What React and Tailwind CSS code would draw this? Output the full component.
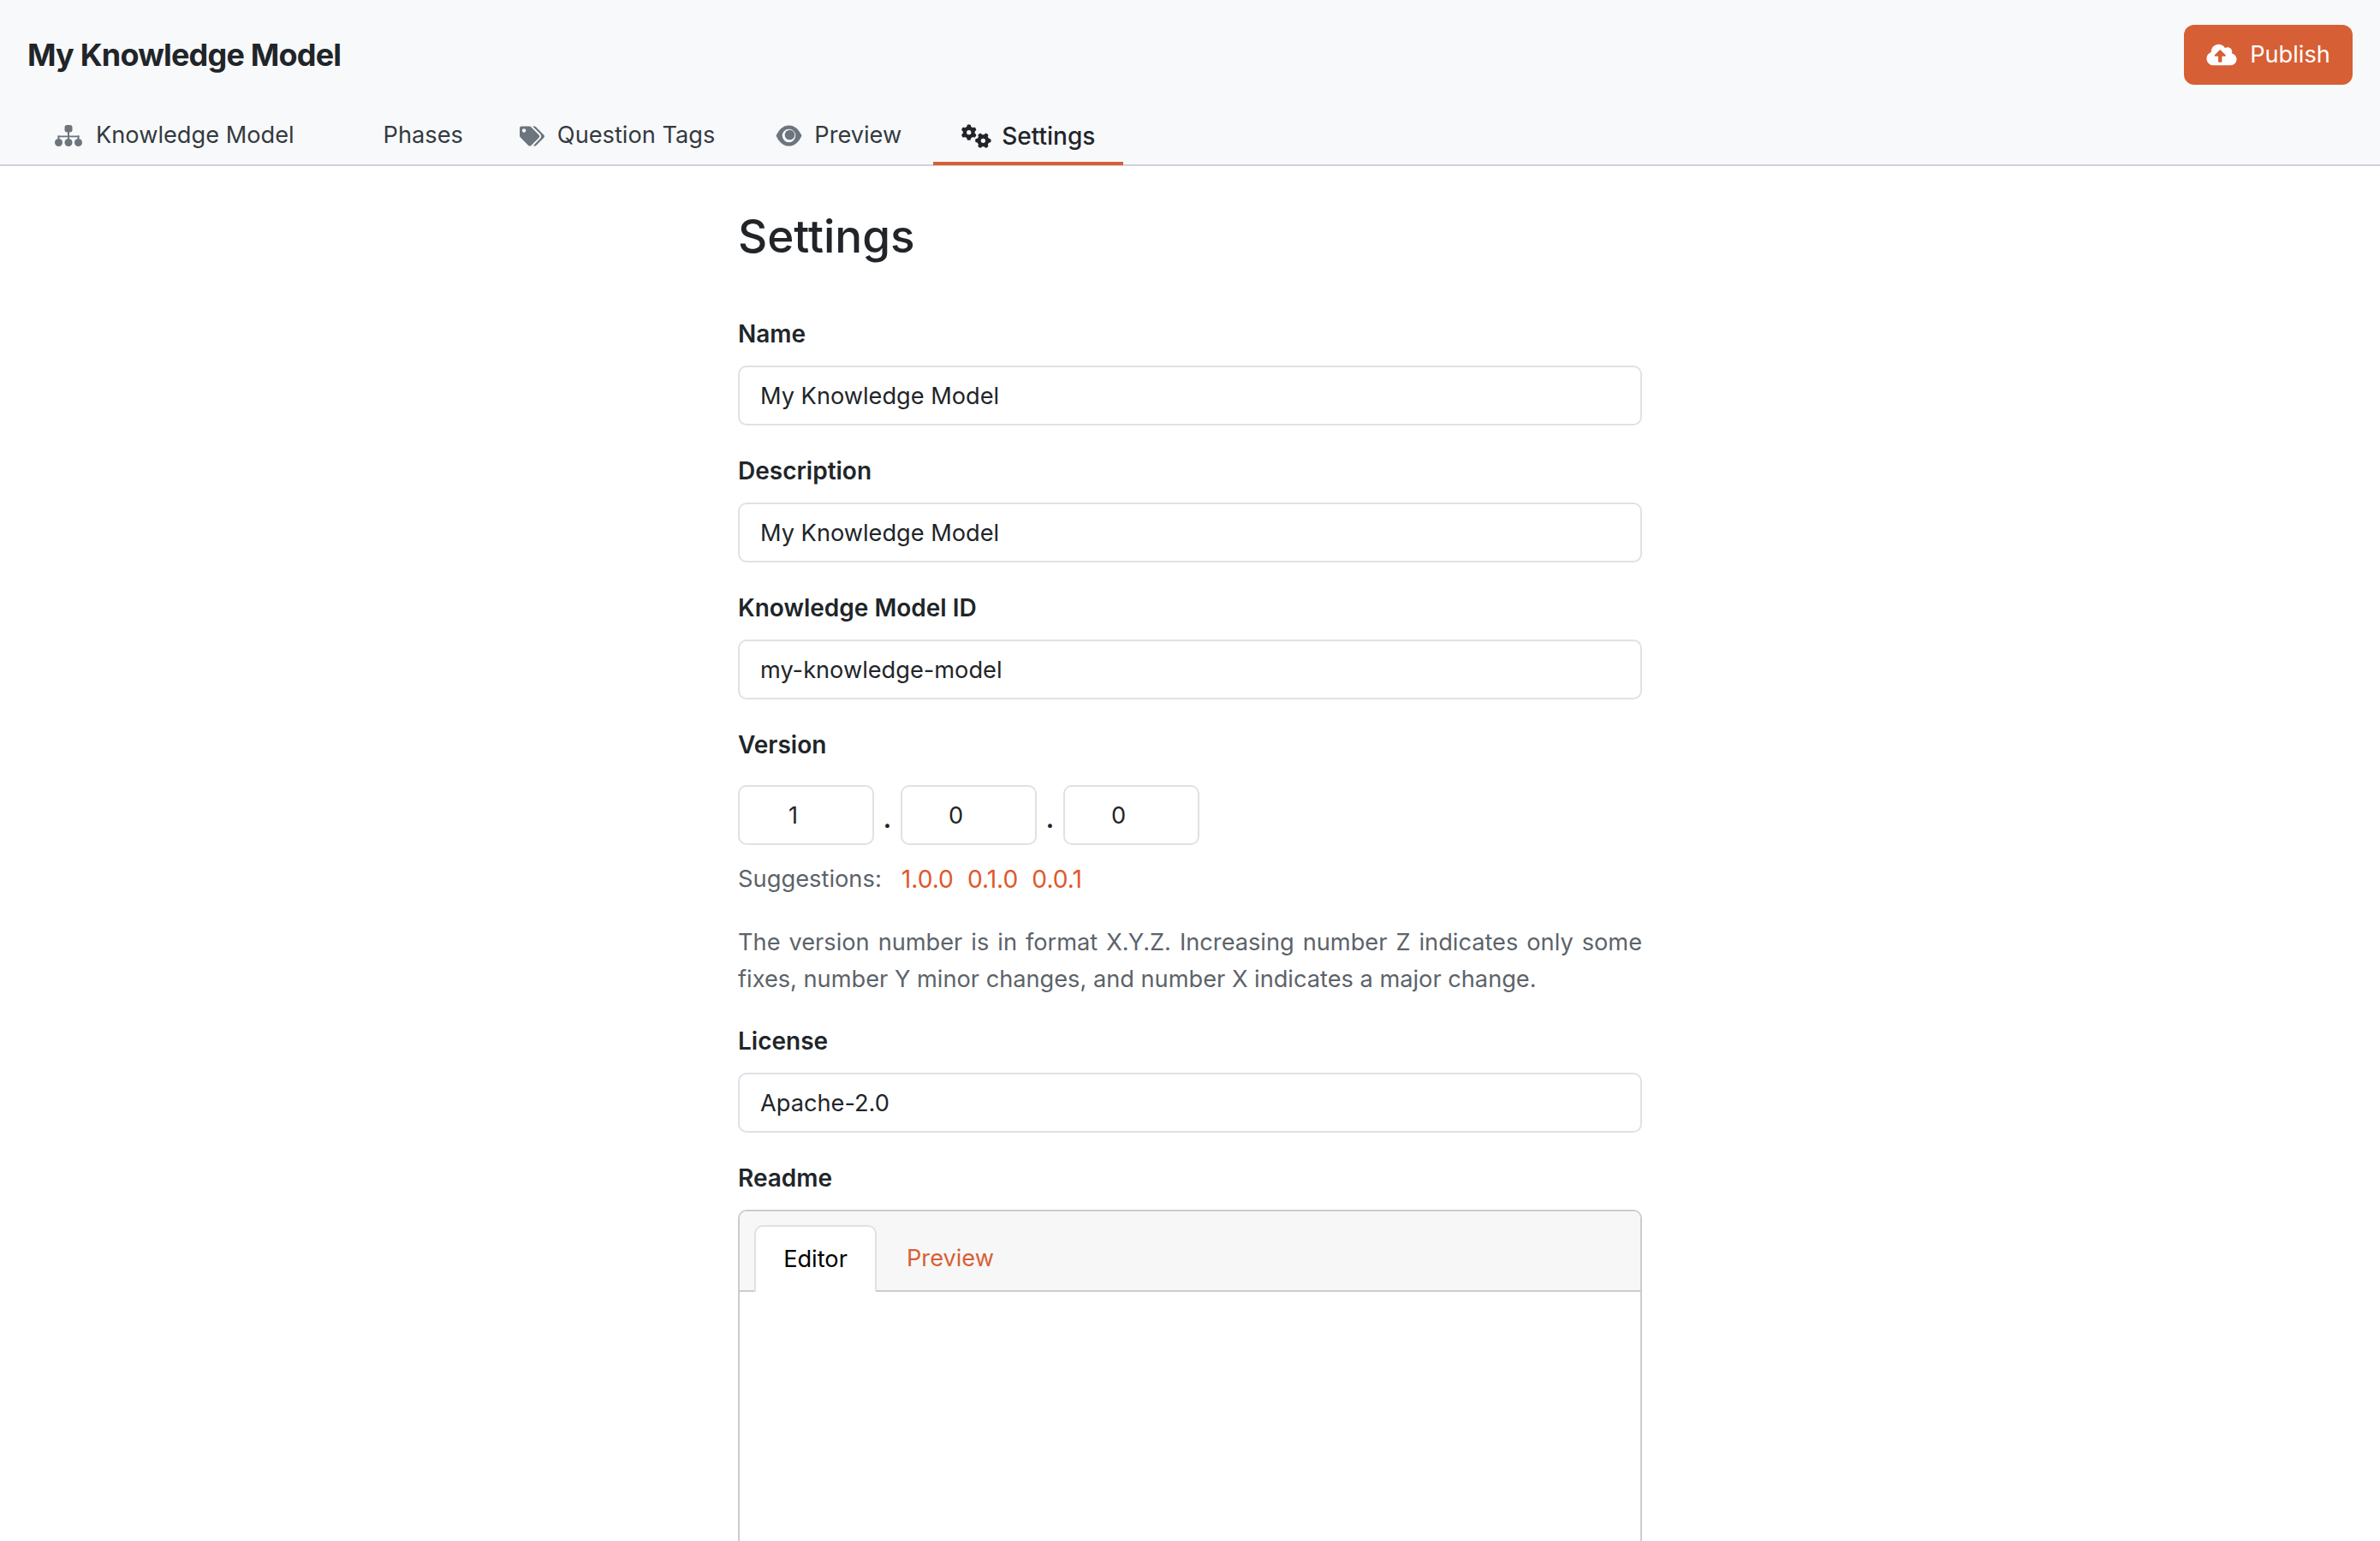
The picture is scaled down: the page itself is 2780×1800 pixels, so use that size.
import React from "react";
import { FaCloudUploadAlt, FaTags } from "react-icons/fa";
import { FaGears } from "react-icons/fa6";

const SitemapIcon = () => (
  <svg viewBox="0 0 32 25" className="w-[32px] h-[25px]" fill="currentColor">
    <rect x="11.5" y="0" width="9" height="8.5" rx="3" />
    <rect x="15" y="8" width="2" height="8" />
    <rect x="3.5" y="12.5" width="25" height="1.8" />
    <rect x="3.5" y="12.5" width="2" height="4" />
    <rect x="26.5" y="12.5" width="2" height="4" />
    <circle cx="4.5" cy="20.5" r="4.5" />
    <circle cx="16" cy="20.5" r="4.5" />
    <circle cx="27.5" cy="20.5" r="4.5" />
  </svg>
);

const EyeIcon = () => (
  <svg viewBox="0 0 32 25" className="w-[31px] h-[25px]" fill="currentColor">
    <path d="M0.5 12.5C4 5 9 0 16 0C23 0 28 5 31.5 12.5C28 20 23 25 16 25C9 25 4 20 0.5 12.5Z" />
    <circle cx="16" cy="12.5" r="8" fill="#f8f9fb" />
    <circle cx="17" cy="11.5" r="6" />
  </svg>
);

const tabs = [
  { label: "Knowledge Model", icon: <SitemapIcon />, slot: "w-[48px]" },
  { label: "Phases", slot: "w-[38px]" },
  { label: "Question Tags", icon: <FaTags className="w-[29px] h-[24px]" />, slot: "w-[44px]" },
  { label: "Preview", icon: <EyeIcon />, slot: "w-[50px] pl-[5px]" },
  { label: "Settings", icon: <FaGears className="w-[35px] h-[28px]" />, slot: "w-[47px]", active: true },
];

const Field = ({ label, value }) => (
  <div className="mb-[32px]">
    <label className="block mb-[16px] text-[28px] leading-[42px] font-semibold text-[#212529]">{label}</label>
    <input
      defaultValue={value}
      className="block w-full h-[70px] px-[24px] border-2 border-[#dee2e6] rounded-[10px] bg-white text-[27.2px] text-[#212529] outline-none"
    />
  </div>
);

const VersionInput = ({ value }) => (
  <input
    defaultValue={value}
    className="w-[159px] h-[70px] pr-[30px] border-2 border-[#dee2e6] rounded-[10px] bg-white text-center text-[27.2px] text-[#212529] outline-none"
  />
);

const Dot = () => <span className="w-[31px] self-end pb-[9px] text-center text-[28px] leading-[42px] font-bold text-[#212529]">.</span>;

export default function App() {
  return (
    <div className="h-[1800px] overflow-hidden bg-white font-['Inter',sans-serif] text-[#212529]">
      {/* Header */}
      <div className="h-[194px] bg-[#f8f9fb] border-b-2 border-[#d0d3d8]">
        <div className="flex items-center justify-between h-[128px] px-[32px]">
          <h1 className="text-[36px] leading-[54px] font-bold tracking-[-0.8px]">My Knowledge Model</h1>
          <button className="flex items-center gap-[15px] h-[70px] w-[197px] justify-center rounded-[12px] bg-[#d75f35] text-[27.2px] text-white">
            <FaCloudUploadAlt className="w-[36px] h-[28px]" />
            Publish
          </button>
        </div>
        <div className="flex pl-[31px] h-[65px]">
          {tabs.map((tab) => (
            <div
              key={tab.label}
              className={`flex items-center h-[65px] px-[33px] border-b-4 ${
                tab.active
                  ? "ml-[4px] text-[28px] font-medium border-[#d75f35] text-[#212529]"
                  : "text-[27.2px] border-transparent text-[#343a40]"
              }`}
            >
              <span className={`flex items-center ${tab.slot} ${tab.active ? "text-[#212529]" : "text-[#6c757d]"}`}>
                {tab.icon}
              </span>
              {tab.label}
            </div>
          ))}
        </div>
      </div>

      {/* Settings form */}
      <div className="w-[1056px] mx-auto">
        <h2 className="mt-[48px] mb-[59px] text-[53px] leading-[68px] font-medium">Settings</h2>
        <Field label="Name" value="My Knowledge Model" />
        <Field label="Description" value="My Knowledge Model" />
        <Field label="Knowledge Model ID" value="my-knowledge-model" />

        <label className="block mb-[26px] text-[28px] leading-[42px] font-semibold">Version</label>
        <div className="flex">
          <VersionInput value="1" />
          <Dot />
          <VersionInput value="0" />
          <Dot />
          <VersionInput value="0" />
        </div>
        <div className="flex mt-[19px] text-[27.3px] leading-[42px] text-[#5c636a]">
          <span>Suggestions:</span>
          <span className="flex gap-[16px] ml-[23px] text-[28.2px] text-[#e0582b]">
            <a>1.0.0</a>
            <a>0.1.0</a>
            <a>0.0.1</a>
          </span>
        </div>
        <p className="mt-[32px] mb-[30px] text-[27.2px] leading-[42.5px] text-justify text-[#5c636a]">
          The version number is in format X.Y.Z. Increasing number Z indicates only some fixes, number Y minor changes, and
          number X indicates a major change.
        </p>

        <Field label="License" value="Apache-2.0" />

        <label className="block mb-[16px] text-[28px] leading-[42px] font-semibold">Readme</label>
        <div className="h-[500px] border-2 border-[#cccccc] rounded-t-[10px]">
          <div className="flex h-[94px] px-[17px] pt-[16px] bg-[#f7f7f7] border-b-2 border-[#cccccc] rounded-t-[8px]">
            <div className="flex items-center justify-center w-[143px] h-[78px] -mb-[2px] bg-white border-2 border-b-0 border-[#dee2e6] rounded-t-[10px] text-[27.2px] text-black">
              Editor
            </div>
            <div className="flex items-center pl-[35px] pt-[2px] text-[27.2px] text-[#d75f35]">Preview</div>
          </div>
        </div>
      </div>
    </div>
  );
}
